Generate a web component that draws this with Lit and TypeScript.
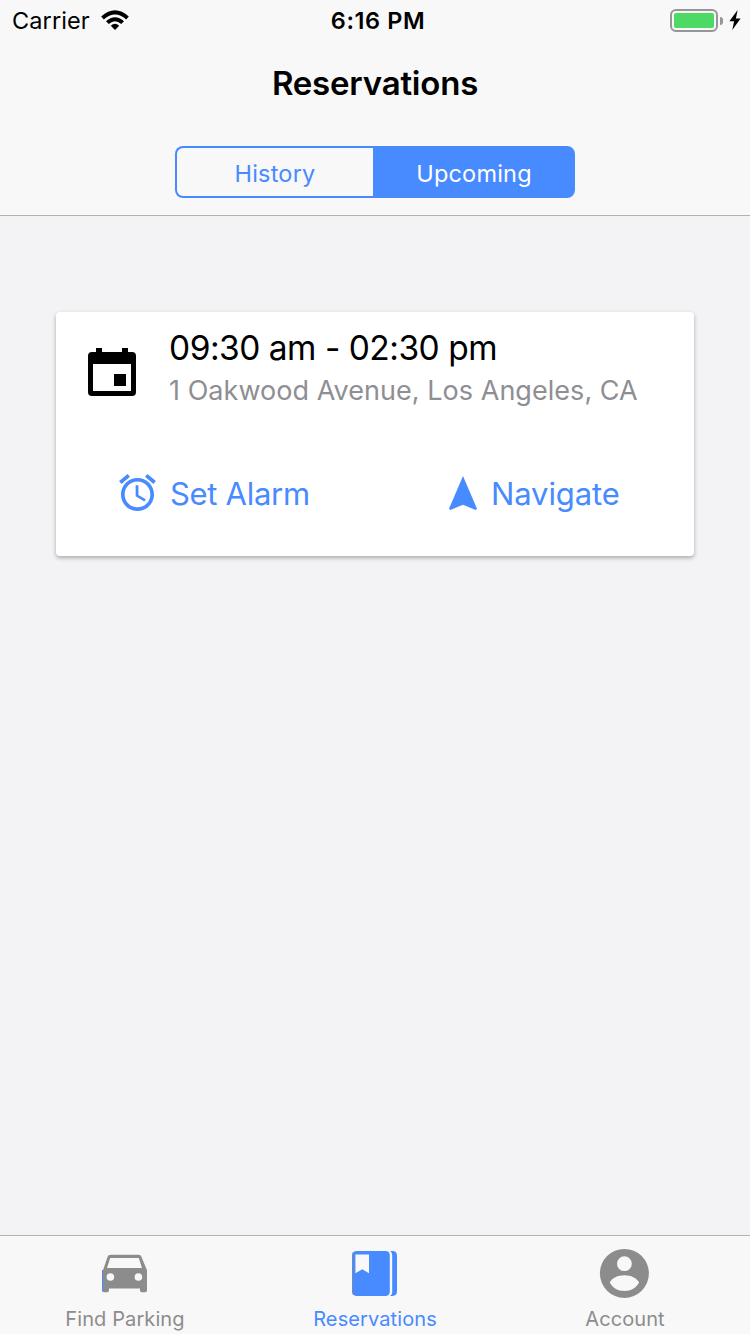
import { LitElement, html, css, svg } from "lit";
import { customElement, state } from "lit/decorators.js";

const wifiIcon = svg`<svg class="wifi" width="28" height="20" viewBox="101 10 28 20">
  <path d="M101.2 16.6Q115 4 128.8 16.6L126.2 19.4Q115 9.4 103.8 19.4Z" fill="#000"/>
  <path d="M106 21.2Q115 13.2 124 21.2L121.2 24Q115 18.6 108.8 24Z" fill="#000"/>
  <path d="M110.8 25.8Q115 21.8 119.2 25.8L115 30Z" fill="#000"/>
</svg>`;

const boltIcon = svg`<svg class="bolt" width="12" height="20" viewBox="0 0 12 20">
  <path d="M8.6 0 .4 11.3h4.7L3.3 20 11.6 8.4H6.9Z" fill="#000"/>
</svg>`;

const calendarIcon = svg`<svg width="48" height="48" viewBox="0 0 48 48">
  <path fill-rule="evenodd" d="M8 0h6v4h20V0h6v4h4a4 4 0 0 1 4 4v36a4 4 0 0 1-4 4H4a4 4 0 0 1-4-4V8a4 4 0 0 1 4-4h4ZM5 16v27h38V16ZM26 26h12v12H26Z"/>
</svg>`;

const alarmIcon = svg`<svg width="37" height="37" viewBox="2 1.86 20 20.14" fill="currentColor">
  <path d="M22 5.72l-4.6-3.86-1.29 1.53 4.6 3.86L22 5.72zM7.88 3.39L6.6 1.86 2 5.71l1.29 1.53 4.59-3.85zM12.5 8H11v6l4.75 2.85.75-1.23-4-2.37V8zM12 4c-4.97 0-9 4.03-9 9s4.02 9 9 9c4.97 0 9-4.03 9-9s-4.03-9-9-9zm0 16c-3.87 0-7-3.13-7-7s3.13-7 7-7 7 3.13 7 7-3.13 7-7 7z"/>
</svg>`;

const navigateIcon = svg`<svg width="28" height="34" viewBox="4.5 2 15 19" preserveAspectRatio="none" fill="currentColor">
  <path d="M12 2 4.5 20.29l.71.71L12 18l6.79 3 .71-.71z"/>
</svg>`;

const carIcon = svg`<svg width="50" height="50" viewBox="100 1249 50 50">
  <path fill="#488aff" d="M102 1270h2v22h-1.200q-.8-.4-.8-2Z"/>
  <path fill="#8c8c8c" fill-rule="evenodd" d="M110.600 1254.700h27.800c1.700 0 2.600.9 3.100 2.300l5.500 13.200v19.800c0 1.400-.9 2.300-2.300 2.300h-2.400c-1.400 0-2.300-.9-2.300-2.300v-1.500h-31v1.500c0 1.400-.9 2.300-2.300 2.300h-1.600c-1.300 0-2.100-.9-2.100-2.300v-19.800l4.500-13.200c.5-1.400 1.400-2.300 3.600-2.300ZM110.200 1258L107 1268h35l-3.200-10ZM114.200 1277a3.800 3.800 0 1 0-7.600 0a3.800 3.800 0 1 0 7.600 0ZM142.200 1277a3.800 3.800 0 1 0-7.600 0a3.800 3.800 0 1 0 7.600 0Z"/>
</svg>`;

const bookIcon = svg`<svg width="50" height="50" viewBox="350 1249 50 50">
  <path fill="#8c8c8c" d="M354 1252h-1q-1 1.500-1 3v37q0 1.500 1 3h1Z"/>
  <path fill="#488aff" fill-rule="evenodd" d="M356.600 1251h29c2.600 0 4.200 1.600 4.200 4.200v36.600c0 2.600-1.600 4.200-4.200 4.200h-29c-2.400 0-4-1.600-4-4.200v-36.600c0-2.600 1.600-4.200 4-4.200ZM355.400 1254.600v18.700l6.900-4 6.700 4v-18.700Z"/>
  <path fill="#488aff" d="M390 1251h2.600c2.800 0 4.400 1.600 4.400 4.400v36.200c0 2.800-1.600 4.400-4.400 4.400H390c1.500-.9 2.200-2.300 2.200-4.300v-36.400c0-2-.7-3.400-2.200-4.300Z"/>
</svg>`;

const accountIcon = svg`<svg width="50" height="50" viewBox="600 1249 50 50">
  <path fill="#8c8c8c" fill-rule="evenodd" d="M648.900 1273.400a24.500 24.500 0 1 0-49 0a24.500 24.500 0 1 0 49 0ZM631.800 1263.700a7.400 7.400 0 1 0-14.800 0a7.400 7.400 0 1 0 14.800 0ZM609.700 1282.500c2.200-4.400 8-7.200 14.700-7.200s12.500 2.800 14.700 7.200c-2.700 5.200-8.100 8.500-14.700 8.500s-12-3.300-14.700-8.500Z"/>
</svg>`;

@customElement("app-root")
export class AppRoot extends LitElement {
  @state() private segment = "upcoming";

  static styles = css`
    :host {
      display: flex;
      flex-direction: column;
      width: 750px;
      height: 1334px;
      overflow: hidden;
      background: #f3f3f5;
      color: #000;
      font-family: Inter, "Liberation Sans", sans-serif;
    }
    svg { display: block; flex: none; overflow: visible; }
    header {
      box-sizing: border-box;
      height: 216px;
      background: #f8f8f8;
      border-bottom: 1px solid #b2b2b2;
    }
    .status {
      display: grid;
      grid-template-columns: 1fr auto 1fr;
      height: 40px;
      line-height: 41px;
      font-size: 23.5px;
      white-space: nowrap;
    }
    .carrier { display: flex; padding-left: 12px; letter-spacing: 0.1px; }
    .carrier span { width: 89px; }
    .wifi { margin-top: 10px; }
    .clock { font-weight: 600; letter-spacing: 0.6px; padding-left: 6px; }
    .power { display: flex; justify-content: flex-end; padding: 9px 9px 0 0; }
    .battery {
      box-sizing: border-box;
      width: 48px;
      height: 23px;
      padding: 2px;
      border: 2px solid #969698;
      border-radius: 6px;
    }
    .charge { height: 15px; border-radius: 2px; background: #4cd964; }
    .nub { width: 3px; height: 8px; margin: 8px 6px 0 2px; border-radius: 0 4px 4px 0; background: #969698; }
    .bolt { margin-top: 1px; }
    h1 {
      margin: 0;
      height: 106px;
      line-height: 86px;
      font-size: 33px;
      font-weight: 600;
      letter-spacing: -0.2px;
      text-align: center;
    }
    .segments {
      display: grid;
      grid-template-columns: 198px 202px;
      box-sizing: border-box;
      width: 400px;
      height: 52px;
      margin: 0 auto;
    }
    .segment {
      box-sizing: border-box;
      height: 52px;
      margin: 0;
      padding: 4px 0 0;
      border: 2px solid #488aff;
      background: transparent;
      color: #488aff;
      font: 400 23.5px/44px Inter, sans-serif;
      letter-spacing: 0.2px;
    }
    .segment:first-child { border-right: 0; border-radius: 8px 0 0 8px; }
    .segment:last-child { border-radius: 0 8px 8px 0; }
    .active { background: #488aff; color: #fff; }
    main { flex: 1; padding: 96px 56px 0; }
    .card {
      box-sizing: border-box;
      height: 244px;
      background: #fff;
      border-radius: 4px;
      box-shadow: 0 2px 4px rgba(0, 0, 0, 0.3);
      white-space: nowrap;
    }
    .booking { display: flex; gap: 32px; padding: 14px 0 0 32px; height: 128px; }
    .booking svg { margin-top: 22px; }
    .time { font-size: 33.5px; line-height: 45px; letter-spacing: -0.5px; padding-left: 1px; }
    .place { font-size: 27px; line-height: 40px; color: #8e8e93; letter-spacing: 0.04px; padding-left: 1px; }
    .actions { display: grid; grid-template-columns: 1fr 1fr; height: 74px; }
    .action {
      display: flex;
      align-items: center;
      margin: 0;
      border: 0;
      background: none;
      color: #488aff;
      font: 400 31px/74px Inter, sans-serif;
    }
    .action span { padding-top: 3px; }
    .alarm { gap: 14px; padding: 0 0 0 63px; letter-spacing: -0.3px; }
    .navigate { gap: 14px; padding: 0 0 0 74px; letter-spacing: -0.1px; }
    nav {
      box-sizing: border-box;
      display: grid;
      grid-template-columns: repeat(3, 1fr);
      height: 99px;
      padding-top: 13px;
      border-top: 1px solid #b2b2b2;
      background: #f8f8f8;
    }
    .tab {
      display: flex;
      flex-direction: column;
      align-items: center;
      color: #8c8c8c;
      font-size: 20px;
      line-height: 40px;
      letter-spacing: 0.1px;
      white-space: nowrap;
    }
    .tab.selected { color: #488aff; }
  `;

  private renderSegment(id: string, label: string) {
    return html`<button
      class="segment ${this.segment === id ? "active" : ""}"
      @click=${() => (this.segment = id)}
    >${label}</button>`;
  }

  render() {
    return html`
      <header>
        <div class="status">
          <div class="carrier"><span>Carrier</span>${wifiIcon}</div>
          <div class="clock">6:16 PM</div>
          <div class="power">
            <div class="battery"><div class="charge"></div></div>
            <div class="nub"></div>
            ${boltIcon}
          </div>
        </div>
        <h1>Reservations</h1>
        <div class="segments">
          ${this.renderSegment("history", "History")}${this.renderSegment("upcoming", "Upcoming")}
        </div>
      </header>
      <main>
        <section class="card">
          <div class="booking">
            ${calendarIcon}
            <div>
              <div class="time">09:30 am - 02:30 pm</div>
              <div class="place">1 Oakwood Avenue, Los Angeles, CA</div>
            </div>
          </div>
          <div class="actions">
            <button class="action alarm">${alarmIcon}<span>Set Alarm</span></button>
            <button class="action navigate">${navigateIcon}<span>Navigate</span></button>
          </div>
        </section>
      </main>
      <nav>
        <div class="tab">${carIcon}<span>Find Parking</span></div>
        <div class="tab selected">${bookIcon}<span>Reservations</span></div>
        <div class="tab">${accountIcon}<span>Account</span></div>
      </nav>
    `;
  }
}
